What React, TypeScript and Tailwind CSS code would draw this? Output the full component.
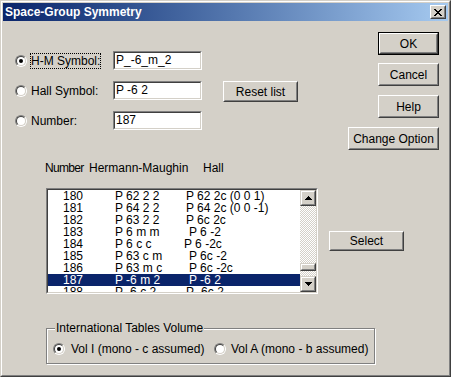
import type { ReactNode } from "react"

const rows = [
  { n: "180", hm: "P 62 2 2", hall: "P 62 2c (0 0 1)", w: "w-[71px]" },
  { n: "181", hm: "P 64 2 2", hall: "P 64 2c (0 0 -1)", w: "w-[71px]" },
  { n: "182", hm: "P 63 2 2", hall: "P 6c 2c", w: "w-[71px]" },
  { n: "183", hm: "P 6 m m", hall: "P 6 -2", w: "w-[74px]" },
  { n: "184", hm: "P 6 c c", hall: "P 6 -2c", w: "w-[69px]" },
  { n: "185", hm: "P 63 c m", hall: "P 6c -2", w: "w-[74px]" },
  { n: "186", hm: "P 63 m c", hall: "P 6c -2c", w: "w-[74px]" },
  { n: "187", hm: "P -6 m 2", hall: "P -6 2", w: "w-[74px]", sel: true },
  { n: "188", hm: "P -6 c 2", hall: "P -6c 2", w: "w-[71px]" },
]

function Button({ children, className = "", isDefault = false }: { children: ReactNode; className?: string; isDefault?: boolean }) {
  const face = (
    <div className="flex h-full w-full border border-t-white border-l-white border-r-[#404040] border-b-[#404040]">
      <div className="flex flex-1 items-center justify-center border border-t-[#d4d0c8] border-l-[#d4d0c8] border-r-[#808080] border-b-[#808080] text-[12px] leading-none">
        {children}
      </div>
    </div>
  )
  if (isDefault) return <div className={`border border-black ${className}`}>{face}</div>
  return <div className={className}>{face}</div>
}

function Radio({ checked = false }: { checked?: boolean }) {
  return (
    <div className="h-[12px] w-[12px] shrink-0 rounded-full border border-t-[#808080] border-l-[#808080] border-r-white border-b-white">
      <div className="flex h-full w-full items-center justify-center rounded-full border border-t-[#404040] border-l-[#404040] border-r-[#d4d0c8] border-b-[#d4d0c8] bg-white">
        {checked && <div className="h-[4px] w-[4px] rounded-full bg-black" />}
      </div>
    </div>
  )
}

function Field({ value }: { value: string }) {
  return (
    <div className="h-[19px] w-[89px] shrink-0 border border-t-[#808080] border-l-[#808080] border-r-white border-b-white">
      <div className="h-full border border-t-[#404040] border-l-[#404040] border-r-[#d4d0c8] border-b-[#d4d0c8] bg-white pl-[1px] text-[12px] leading-[15px]">
        {value}
      </div>
    </div>
  )
}

function ScrollBtn({ up }: { up?: boolean }) {
  return (
    <div className="h-[16px] w-[16px] border border-t-[#d4d0c8] border-l-[#d4d0c8] border-r-[#404040] border-b-[#404040] bg-[#d4d0c8]">
      <div className="flex h-full w-full items-center justify-center border border-t-white border-l-white border-r-[#808080] border-b-[#808080]">
        <svg width="7" height="4" viewBox="0 0 7 4" shapeRendering="crispEdges">
          {up ? <path d="M3 0h1v1h1v1h1v1h1v1H0V3h1V2h1V1h1z" fill="#000" /> : <path d="M0 0h7v1H6v1H5v1H4v1H3V3H2V2H1V1H0z" fill="#000" />}
        </svg>
      </div>
    </div>
  )
}

export default function App() {
  return (
    <div className="h-[377px] w-[451px] border border-t-[#d4d0c8] border-l-[#d4d0c8] border-r-[#404040] border-b-[#404040] bg-[#d4d0c8] font-['Liberation_Sans',Arial,sans-serif] text-black">
      <div className="flex h-full flex-col border border-t-white border-l-white border-r-[#808080] border-b-[#808080] p-[1px]">
        {/* title bar */}
        <div className="flex h-[18px] shrink-0 items-center bg-linear-to-r from-[#0a246a] to-[#a6caf0] pl-[2px] pr-[2px]">
          <span className="text-[12px] font-bold leading-none text-white">Space-Group Symmetry</span>
          <div className="ml-auto h-[14px] w-[16px] border border-t-white border-l-white border-r-[#404040] border-b-[#404040] bg-[#d4d0c8]">
            <div className="flex h-full w-full items-center justify-center border border-t-[#d4d0c8] border-l-[#d4d0c8] border-r-[#808080] border-b-[#808080]">
              <svg width="8" height="7" viewBox="0 0 8 7" shapeRendering="crispEdges">
                <path d="M0 0h2v1h1v1h2V1h1V0h2v1H7v1H6v1H5v1h1v1h1v1h1v1H6V6H5V5H3v1H2v1H0V6h1V5h1V4h1V3H2V2H1V1H0z" fill="#000" />
              </svg>
            </div>
          </div>
        </div>

        {/* top controls */}
        <div className="flex h-[129px] shrink-0">
          <div className="ml-[12px] mt-[30px] flex flex-col gap-[11px] text-[12px]">
            <div className="flex h-[19px] items-center">
              <Radio checked />
              <div className="ml-[3px] w-[83px]">
                <span className="border border-dotted border-black leading-[13px]">H-M Symbol:</span>
              </div>
              <Field value="P_-6_m_2" />
            </div>
            <div className="flex h-[19px] items-start">
              <div className="flex h-[19px] items-center">
                <Radio />
                <div className="ml-[4px] w-[82px]">Hall Symbol:</div>
                <Field value="P -6 2" />
              </div>
              <Button className="ml-[21px] h-[21px] w-[75px]">Reset list</Button>
            </div>
            <div className="flex h-[19px] items-center">
              <Radio />
              <div className="ml-[4px] w-[82px]">Number:</div>
              <Field value="187" />
            </div>
          </div>
          <div className="ml-auto mr-[9px] mt-[11px] flex flex-col items-end">
            <Button isDefault className="h-[23px] w-[61px]">OK</Button>
            <Button className="mt-[8px] h-[23px] w-[61px]">Cancel</Button>
            <Button className="mt-[9px] h-[23px] w-[61px]">Help</Button>
            <Button className="mt-[9px] h-[23px] w-[91px]">Change Option</Button>
          </div>
        </div>

        {/* column headers */}
        <div className="ml-[42px] mt-[12px] flex h-[13px] text-[12px] leading-[13px]">
          <span className="w-[44px] tracking-[-0.7px]">Number</span>
          <span className="w-[114px]">Hermann-Maughin</span>
          <span>Hall</span>
        </div>

        {/* list + select */}
        <div className="ml-[43px] mt-[13px] flex items-center">
          <div className="h-[106px] w-[272px] border border-t-[#808080] border-l-[#808080] border-r-white border-b-white">
            <div className="flex h-full border border-t-[#404040] border-l-[#404040] border-r-[#d4d0c8] border-b-[#d4d0c8] bg-white">
              <div className="flex-1 overflow-hidden text-[12px] leading-[12px]">
                {rows.map((r) => (
                  <div key={r.n} className={r.sel ? "flex h-[12px] bg-[#0a246a] text-white" : "flex h-[12px]"}>
                    <span className="w-[52px] shrink-0 pl-[15px] box-content">{r.n}</span>
                    <span className={`${r.w} shrink-0 whitespace-pre`}>{r.hm}</span>
                    <span className="whitespace-pre">{r.hall}</span>
                  </div>
                ))}
              </div>
              <div className="flex w-[16px] shrink-0 flex-col">
                <ScrollBtn up />
                <div className="flex-1 bg-[image:repeating-conic-gradient(#d4d0c8_0_25%,#ffffff_0_50%)] bg-[length:2px_2px]">
                  <div className="mt-[57px] h-[8px] w-[16px] border border-t-[#d4d0c8] border-l-[#d4d0c8] border-r-[#404040] border-b-[#404040] bg-[#d4d0c8]">
                    <div className="h-full w-full border border-t-white border-l-white border-r-[#808080] border-b-[#808080]" />
                  </div>
                </div>
                <ScrollBtn />
              </div>
            </div>
          </div>
          <Button className="ml-[11px] h-[20px] w-[75px]">Select</Button>
        </div>

        {/* group box */}
        <fieldset className="ml-[43px] mt-[27px] h-[43px] w-[329px] border border-[#808080] shadow-[inset_1px_1px_0_#ffffff,1px_1px_0_#ffffff]">
          <legend className="ml-[8px] bg-[#d4d0c8] px-[1px] text-[12px] leading-[14px]">International Tables Volume</legend>
          <div className="mt-[7px] flex h-[13px] items-center pl-[6px] text-[12px]">
            <Radio checked />
            <span className="ml-[6px] w-[143px]">Vol I (mono - c assumed)</span>
            <Radio />
            <span className="ml-[5px]">Vol A (mono - b assumed)</span>
          </div>
        </fieldset>
      </div>
    </div>
  )
}
